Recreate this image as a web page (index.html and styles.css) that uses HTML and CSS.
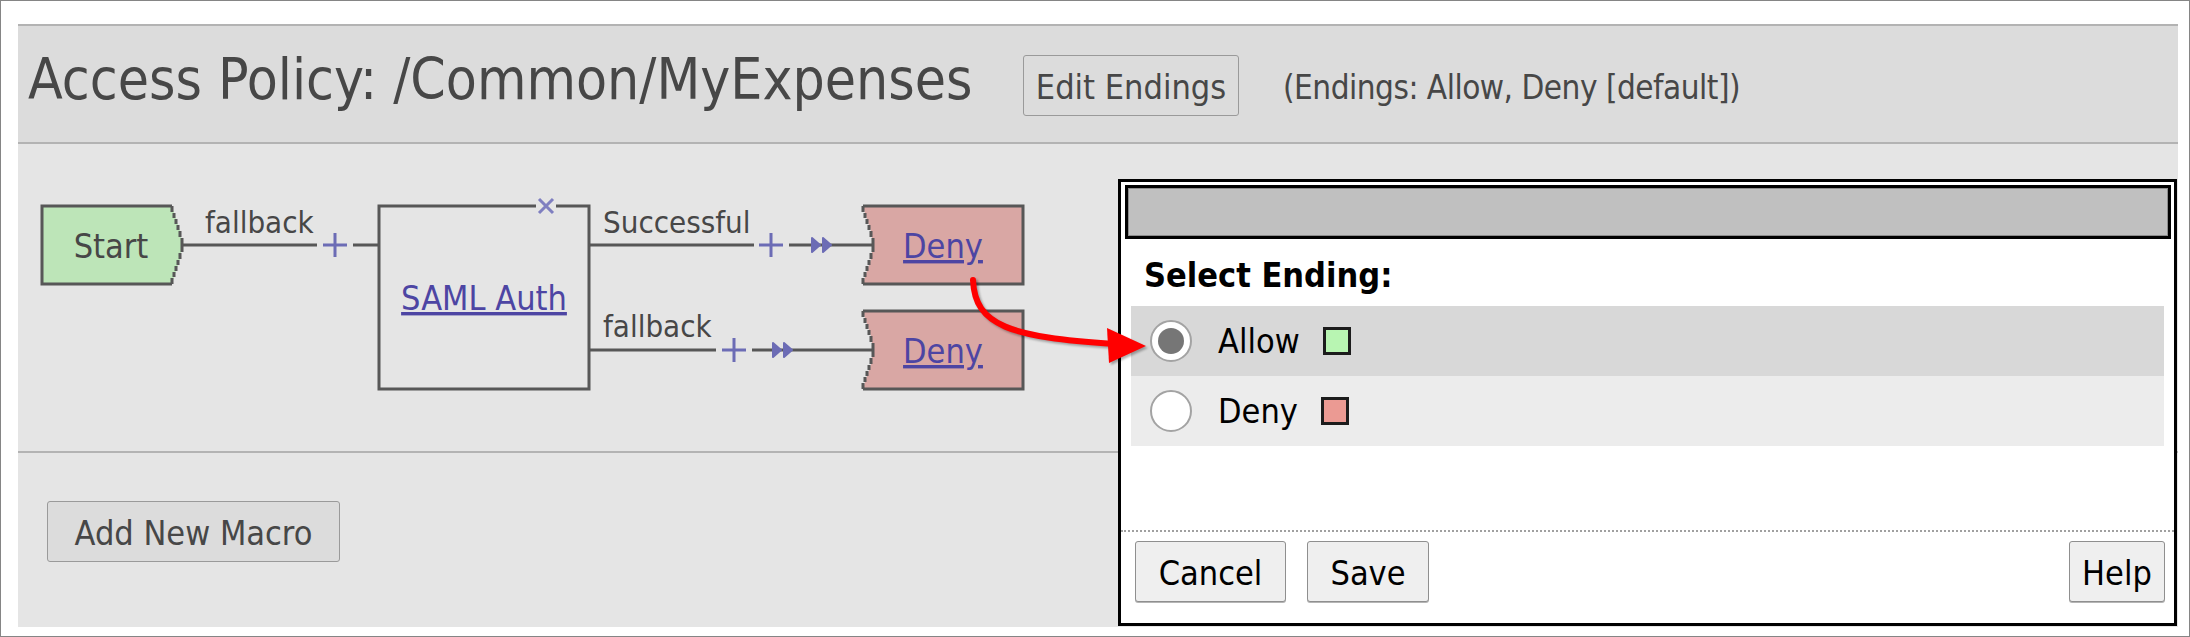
FILE: index.html
```html
<!DOCTYPE html>
<html>
<head>
<meta charset="utf-8">
<title>Access Policy</title>
<link rel="stylesheet" href="styles.css">
</head>
<body>
<div class="frame">
  <div class="app">
    <div class="header">
      <h1 class="title">Access Policy: /Common/MyExpenses</h1>
      <button class="btn btn-head">Edit Endings</button>
      <span class="note">(Endings: Allow, Deny [default])</span>
    </div>

    <div class="canvas">
      <svg class="diagram" width="2159" height="307" viewBox="18 144 2159 307">
        <!-- Start node -->
        <path class="fill-start" d="M42,206 H172 L174,213 176,219 178,225 180,231 181,238 182,245 181,252 180,259 178,265 176,271 174,277 172,284 H42 Z"/>
        <path class="edge" d="M172,206 H42 V284 H172"/>
        <path class="edge" d="M172,206 V212 M174,213 V218 M176,219 V224 M178,225 V230 M180,231 V237 M182,238 V252 M180,253 V259 M178,260 V265 M176,266 V271 M174,272 V277 M172,278 V284"/>
        <text class="t-node" x="111" y="258" text-anchor="middle">Start</text>

        <!-- Start -> SAML -->
        <path class="edge" d="M183,245 H317 M353,245 H379"/>
        <path class="plus" d="M323,245 H347 M335,233 V257"/>
        <text class="t-label" x="205" y="233">fallback</text>

        <!-- SAML Auth box -->
        <path class="edge" d="M536,206 H379 V389 H589 V206 H556"/>
        <path class="cross" d="M539,199 L553,213 M553,199 L539,213"/>
        <a href="#"><text class="t-link" x="484" y="310" text-anchor="middle">SAML Auth</text></a>

        <!-- Successful branch -->
        <path class="edge" d="M589,245 H754 M789,245 H873"/>
        <path class="plus" d="M759,245 H783 M771,233 V257"/>
        <path class="chev" d="M812,238 L820,245 L812,252 Z M823,238 L831,245 L823,252 Z"/>
        <text class="t-label" x="603" y="233">Successful</text>

        <!-- fallback branch -->
        <path class="edge" d="M589,350 H716 M752,350 H873"/>
        <path class="plus" d="M722,350 H746 M734,338 V362"/>
        <path class="chev" d="M773,343 L781,350 L773,357 Z M784,343 L792,350 L784,357 Z"/>
        <text class="t-label" x="603" y="337">fallback</text>

        <!-- Deny endings -->
        <g>
          <path class="fill-deny" d="M863,206 H1023 V284 H863 L865,277 867,271 869,265 871,259 872,252 873,245 872,238 871,231 869,225 867,219 865,213 Z"/>
          <path class="edge" d="M863,206 H1023 V284 H863"/>
          <path class="edge" d="M863,206 V212 M865,213 V218 M867,219 V224 M869,225 V230 M871,231 V237 M873,238 V252 M871,253 V259 M869,260 V265 M867,266 V271 M865,272 V277 M863,278 V284"/>
          <a href="#"><text class="t-link" x="943" y="258" text-anchor="middle">Deny</text></a>
        </g>
        <g transform="translate(0,105)">
          <path class="fill-deny" d="M863,206 H1023 V284 H863 L865,277 867,271 869,265 871,259 872,252 873,245 872,238 871,231 869,225 867,219 865,213 Z"/>
          <path class="edge" d="M863,206 H1023 V284 H863"/>
          <path class="edge" d="M863,206 V212 M865,213 V218 M867,219 V224 M869,225 V230 M871,231 V237 M873,238 V252 M871,253 V259 M869,260 V265 M867,266 V271 M865,272 V277 M863,278 V284"/>
          <a href="#"><text class="t-link" x="943" y="258" text-anchor="middle">Deny</text></a>
        </g>
      </svg>
    </div>

    <div class="macros">
      <button class="btn btn-macro">Add New Macro</button>
    </div>

    <div class="dialog">
      <div class="titlebar"></div>
      <div class="dlg-heading">Select Ending:</div>
      <div class="rows">
        <div class="row row-allow">
          <span class="radio checked"></span>
          <span class="opt">Allow</span>
          <span class="swatch swatch-allow"></span>
        </div>
        <div class="row row-deny">
          <span class="radio"></span>
          <span class="opt">Deny</span>
          <span class="swatch swatch-deny"></span>
        </div>
      </div>
      <div class="dlg-footer">
        <button class="btn btn-dlg btn-cancel">Cancel</button>
        <button class="btn btn-dlg btn-save">Save</button>
        <button class="btn btn-dlg btn-help">Help</button>
      </div>
    </div>

    <svg class="callout" width="230" height="110" viewBox="950 270 230 110">
      <path class="callout-line" d="M973,280 C975,326 1010,337 1114,344"/>
      <polygon class="callout-head" points="1146,346 1107,328 1109,363"/>
    </svg>
  </div>
</div>
</body>
</html>
```
FILE: styles.css
```css
* { box-sizing: border-box; }

html, body {
  margin: 0;
  padding: 0;
  background: #ffffff;
}

body {
  font-family: "DejaVu Sans Condensed", "DejaVu Sans", sans-serif;
  font-stretch: condensed;
  color: #474747;
}

.frame {
  width: 2190px;
  height: 637px;
  border: 1px solid #858585;
  padding: 23px 11px 9px 17px;
}

.app {
  position: relative;
  height: 100%;
  display: flex;
  flex-direction: column;
  background: #e5e5e5;
}

/* header */
.header {
  flex: none;
  height: 120px;
  background: #dcdcdc;
  border-top: 2px solid #b3b3b3;
  border-bottom: 2px solid #b3b3b3;
  display: flex;
  align-items: baseline;
  padding: 26px 0 0 10px;
}

.title {
  flex: none;
  width: 995px;
  margin: 0;
  font-size: 56.5px;
  line-height: 56px;
  font-weight: normal;
  color: #474747;
}

.btn {
  font-family: inherit;
  font-stretch: condensed;
  font-size: 34px;
  line-height: 40px;
  height: 61px;
  padding: 11px 0 8px;
  border: 1px solid #9a9a9a;
  border-radius: 3px;
  background: #dcdcdc;
  color: #474747;
  text-align: center;
}

.btn-head { width: 216px; flex: none; }

.note {
  margin-left: 44px;
  font-size: 33px;
  letter-spacing: -0.5px;
  color: #474747;
}

/* diagram canvas */
.canvas {
  flex: none;
  position: relative;
  height: 309px;
  border-bottom: 2px solid #b3b3b3;
}

.diagram {
  display: block;
}

.fill-start { fill: #bde5b8; }
.fill-deny { fill: #d9a7a4; }

.edge {
  fill: none;
  stroke: #575757;
  stroke-width: 3;
}

.plus {
  fill: none;
  stroke: #6c6cb5;
  stroke-width: 3;
}

.cross {
  fill: none;
  stroke: #7f7fc0;
  stroke-width: 3;
}

.chev {
  fill: #6c6cb5;
  stroke: #6c6cb5;
  stroke-width: 2;
  stroke-linejoin: round;
}

.t-node, .t-label, .t-link {
  font-family: "DejaVu Sans Condensed", "DejaVu Sans", sans-serif;
  font-stretch: condensed;
}

.t-node { font-size: 34px; fill: #474747; }
.t-label { font-size: 31px; fill: #474747; }
.t-link {
  font-size: 34px;
  fill: #4d45a3;
  text-decoration: underline;
}

/* lower area */
.macros {
  flex: 1;
  padding: 48px 0 0 29px;
}

.btn-macro { width: 293px; }

/* dialog */
.dialog {
  position: absolute;
  left: 1100px;
  top: 155px;
  width: 1059px;
  height: 447px;
  border: 3px solid #000000;
  background: #ffffff;
  display: flex;
  flex-direction: column;
  color: #000000;
  font-size: 34px;
}

.titlebar {
  flex: none;
  height: 54px;
  margin: 3px 3px 0 4px;
  border: 3px solid #000000;
  background: #c0c0c0;
  box-shadow: inset 0 0 0 1px #8c8c8c;
}

.dlg-heading {
  flex: none;
  height: 67px;
  padding: 16px 0 0 23px;
  font-weight: bold;
  line-height: 40px;
}

.rows {
  flex: none;
  margin: 0 10px;
}

.row {
  height: 70px;
  display: flex;
  align-items: center;
  padding-left: 19px;
}

.row-allow { background: #d8d8d8; }
.row-deny { background: #ececec; }

.radio {
  flex: none;
  width: 42px;
  height: 42px;
  border-radius: 50%;
  border: 2px solid #a3a3a3;
  background: #ffffff;
  display: flex;
  align-items: center;
  justify-content: center;
}

.radio.checked::after {
  content: "";
  width: 26px;
  height: 26px;
  border-radius: 50%;
  background: #767676;
}

.opt {
  margin-left: 26px;
  line-height: 40px;
}

.swatch {
  flex: none;
  width: 28px;
  height: 28px;
  margin-left: 23px;
  border: 3px solid #1c1c1c;
}

.swatch-allow { background: #b8f5b2; }
.swatch-deny { background: #eb9a93; }

.dlg-footer {
  margin-top: auto;
  height: 93px;
  border-top: 2px dotted #a0a0a0;
  padding: 9px 9px 0 14px;
  display: flex;
  align-items: flex-start;
}

.btn-dlg {
  background: #efefef;
  border-color: #8f8f8f;
  color: #000000;
  box-shadow: 0 1px 0 #b5b5b5;
}

.btn-cancel { width: 151px; }
.btn-save { width: 122px; margin-left: 21px; }
.btn-help { width: 96px; margin-left: auto; }

/* red annotation arrow */
.callout {
  position: absolute;
  left: 932px;
  top: 246px;
  filter: drop-shadow(2px 2px 1px rgba(0, 0, 0, 0.3));
}

.callout-line {
  fill: none;
  stroke: #ff0000;
  stroke-width: 6;
  stroke-linecap: round;
}

.callout-head { fill: #ff0000; }
```
